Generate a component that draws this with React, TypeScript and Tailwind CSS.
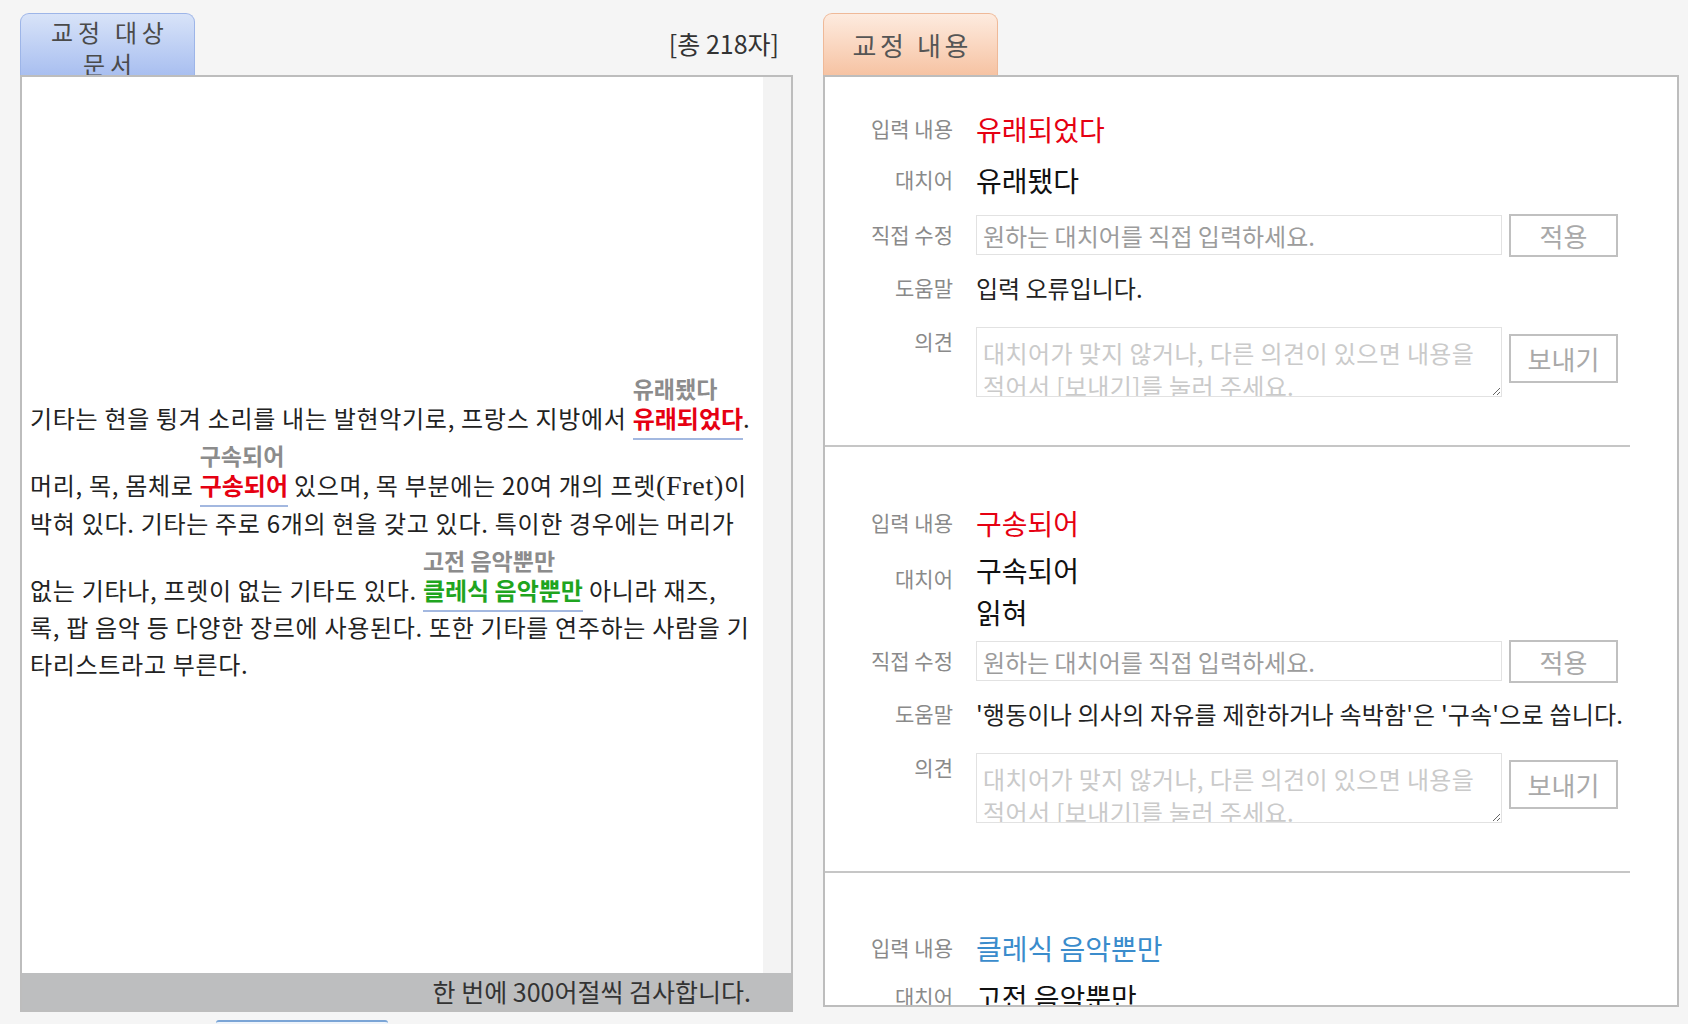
import type { ReactNode } from 'react';

interface MarkProps {
    hint: string;
    word: string;
    wordClass: string;
}

function Mark({ hint, word, wordClass }: MarkProps) {
    return (
        <span className="inline-block align-baseline tracking-normal">
            <span className="block pt-[8px] text-[23px] leading-[22px] font-bold text-[#8c8c8c]">
                {hint}
            </span>
            <span className="block">
                <span className={wordClass}>{word}</span>
            </span>
        </span>
    );
}

function Label({ children, className = '' }: { children: ReactNode; className?: string }) {
    return (
        <div className={`w-[128px] shrink-0 text-right text-[21px] text-[#8a8a8a] ${className}`}>
            {children}
        </div>
    );
}

function EditRow() {
    return (
        <div className="flex h-[56px] items-center">
            <Label>직접 수정</Label>
            <input
                type="text"
                placeholder="원하는 대치어를 직접 입력하세요."
                className="ml-[23px] h-[40px] w-[526px] border border-[#e2e2e2] px-[6px] text-[24px] outline-none placeholder:text-[#9c9c9c]"
            />
            <button className="ml-[7px] h-[43px] w-[109px] border-2 border-[#c0c0c0] bg-white text-[26px] text-[#a9a9a9]">
                적용
            </button>
        </div>
    );
}

function OpinionRow() {
    return (
        <div className="flex items-start pt-[14px]">
            <Label className="leading-[28px]">의견</Label>
            <textarea
                placeholder="대치어가 맞지 않거나, 다른 의견이 있으면 내용을 적어서 [보내기]를 눌러 주세요."
                className="ml-[23px] h-[70px] w-[526px] break-keep border border-[#e2e2e2] px-[6px] py-[8px] text-[24px] leading-[33px] tracking-[0.4px] outline-none placeholder:text-[#cacaca]"
            />
            <button className="ml-[7px] mt-[7px] h-[49px] w-[109px] border-2 border-[#c0c0c0] bg-white text-[26px] text-[#a9a9a9]">
                보내기
            </button>
        </div>
    );
}

export default function App() {
    const redMark = 'border-b-2 border-[#a3b8e0] pb-[3px] font-bold text-[#e60012]';
    const greenMark = 'border-b-2 border-[#a3b8e0] pb-[3px] font-bold text-[#1fa51f]';

    return (
        <div className="flex h-[1024px] w-[1688px] gap-[30px] overflow-hidden bg-[#f5f5f5] pl-[20px] pt-[13px] font-['Noto_Sans_CJK_KR',sans-serif]">
            {/* 교정 대상 문서 */}
            <div className="flex w-[773px] shrink-0 flex-col">
                <div className="flex h-[62px] shrink-0 items-center justify-between">
                    <div className="h-[62px] w-[175px] overflow-hidden rounded-t-[9px] border border-b-0 border-[#9db5e8] bg-linear-to-b from-[#d8e3f8] to-[#a9bff0] pl-[0.2em] pt-[2px] text-center text-[24px] leading-[32px] tracking-[0.2em] text-[#4a4a4a]">
                        교정 대상
                        <br />
                        문서
                    </div>
                    <div className="pr-[14px] text-[25px] text-[#333]">[총 218자]</div>
                </div>

                <div className="flex h-[937px] shrink-0 flex-col border-2 border-[#bdbdbd] bg-white">
                    <div className="flex flex-1">
                        <div className="flex flex-1 items-center pl-[8px]">
                            <p className="whitespace-nowrap text-[24px] leading-[37px] tracking-[0.7px] text-[#222]">
                                기타는 현을 튕겨 소리를 내는 발현악기로, 프랑스 지방에서{' '}
                                <Mark hint="유래됐다" word="유래되었다" wordClass={redMark} />.
                                <br />
                                머리, 목, 몸체로{' '}
                                <Mark hint="구속되어" word="구송되어" wordClass={redMark} /> 있으며,
                                목 부분에는 20여 개의 프렛
                                <span className="font-['Liberation_Serif',serif] text-[28px]">(Fret)</span>이
                                <br />
                                박혀 있다. 기타는 주로 6개의 현을 갖고 있다. 특이한 경우에는 머리가
                                <br />
                                없는 기타나, 프렛이 없는 기타도 있다.{' '}
                                <Mark hint="고전 음악뿐만" word="클레식 음악뿐만" wordClass={greenMark} />{' '}
                                아니라 재즈,
                                <br />
                                록, 팝 음악 등 다양한 장르에 사용된다. 또한 기타를 연주하는 사람을 기
                                <br />
                                타리스트라고 부른다.
                            </p>
                        </div>
                        <div className="w-[28px] bg-[#f3f3f3]" />
                    </div>
                    <div className="h-[37px] bg-[#bdbebf] pr-[40px] text-right text-[25px] leading-[37px] text-[#333]">
                        한 번에 300어절씩 검사합니다.
                    </div>
                </div>

                <div className="ml-[196px] mt-[8px] h-[30px] w-[172px] shrink-0 rounded-t-[3px] border-t-2 border-[#7ba5d6] bg-[#eef4fb]" />
            </div>

            {/* 교정 내용 */}
            <div className="flex w-[856px] shrink-0 flex-col">
                <div className="h-[62px] shrink-0">
                    <div className="h-[62px] w-[175px] rounded-t-[9px] border border-b-0 border-[#efb998] bg-linear-to-b from-[#fdebdf] to-[#f6c3a3] pl-[0.14em] text-center text-[26px] leading-[62px] tracking-[0.14em] text-[#555]">
                        교정 내용
                    </div>
                </div>

                <div className="h-[932px] shrink-0 overflow-hidden border-2 border-[#bdbdbd] bg-white">
                    <div className="w-[805px]">
                        {/* 1 */}
                        <div className="border-b-2 border-[#c6c6c6] pb-[48px] pt-[28px]">
                            <div className="flex h-[48px] items-center">
                                <Label>입력 내용</Label>
                                <div className="ml-[23px] text-[28px] text-[#e60012]">유래되었다</div>
                            </div>
                            <div className="flex h-[54px] items-center">
                                <Label>대치어</Label>
                                <div className="ml-[23px] text-[28px] text-[#111]">유래됐다</div>
                            </div>
                            <EditRow />
                            <div className="flex h-[50px] items-center">
                                <Label>도움말</Label>
                                <div className="ml-[23px] text-[24px] text-[#222]">입력 오류입니다.</div>
                            </div>
                            <OpinionRow />
                        </div>

                        {/* 2 */}
                        <div className="border-b-2 border-[#c6c6c6] pb-[48px] pt-[52px]">
                            <div className="flex h-[48px] items-center">
                                <Label>입력 내용</Label>
                                <div className="ml-[23px] text-[28px] text-[#e60012]">구송되어</div>
                            </div>
                            <div className="flex items-start pt-[2px]">
                                <Label className="pt-[8px] leading-[42px]">대치어</Label>
                                <div className="ml-[23px] text-[28px] leading-[42px] text-[#111]">
                                    <div>구속되어</div>
                                    <div>읽혀</div>
                                </div>
                            </div>
                            <EditRow />
                            <div className="flex h-[50px] items-center">
                                <Label>도움말</Label>
                                <div className="ml-[23px] whitespace-nowrap text-[24px] tracking-[0.2px] text-[#222]">
                                    '행동이나 의사의 자유를 제한하거나 속박함'은 '구속'으로 씁니다.
                                </div>
                            </div>
                            <OpinionRow />
                        </div>

                        {/* 3 */}
                        <div className="pt-[51px]">
                            <div className="flex h-[48px] items-center">
                                <Label>입력 내용</Label>
                                <div className="ml-[23px] text-[28px] text-[#3a8ccc]">클레식 음악뿐만</div>
                            </div>
                            <div className="flex h-[50px] items-center">
                                <Label>대치어</Label>
                                <div className="ml-[23px] text-[28px] text-[#111]">고전 음악뿐만</div>
                            </div>
                            <EditRow />
                        </div>
                    </div>
                </div>
            </div>
        </div>
    );
}
